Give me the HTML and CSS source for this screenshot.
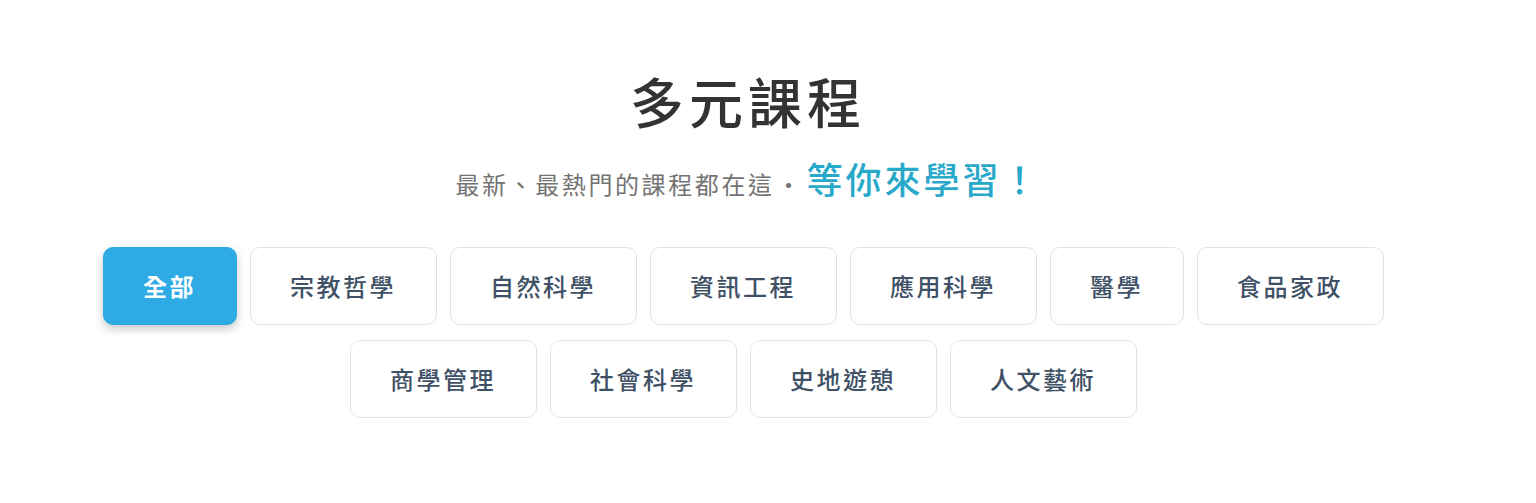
FILE: index.html
```html
<!DOCTYPE html>
<html lang="zh-Hant">
  <head>
    <meta charset="UTF-8" />
    <meta name="viewport" content="width=device-width, initial-scale=1.0" />
    <link rel="stylesheet" href="styles.css">
    <title>多元課程</title>
  </head>

  <body>
    <section class="courses">
      <h2 class="courses__title">多元課程</h2>
      <p class="courses__subtitle">
        最新、最熱門的課程都在這<span class="courses__dot">·</span><span class="courses__highlight">等你來學習！</span>
      </p>
      <ul class="courses__filters">
        <li><button type="button" class="filter-btn is-active">全部</button></li>
        <li><button type="button" class="filter-btn">宗教哲學</button></li>
        <li><button type="button" class="filter-btn">自然科學</button></li>
        <li><button type="button" class="filter-btn">資訊工程</button></li>
        <li><button type="button" class="filter-btn">應用科學</button></li>
        <li><button type="button" class="filter-btn">醫學</button></li>
        <li><button type="button" class="filter-btn">食品家政</button></li>
        <li><button type="button" class="filter-btn">商學管理</button></li>
        <li><button type="button" class="filter-btn">社會科學</button></li>
        <li><button type="button" class="filter-btn">史地遊憩</button></li>
        <li><button type="button" class="filter-btn">人文藝術</button></li>
      </ul>
    </section>
  </body>
</html>
```

FILE: styles.css
```css
* {
  box-sizing: border-box;
}
body {
  margin: 0;
  background-color: #fff;
  font-family: "Noto Sans CJK TC", "Noto Sans", sans-serif;
}
.courses {
  padding: 69px 40px 0 0;
  text-align: center;
}
.courses__title {
  margin: 0;
  font-size: 54px;
  line-height: 1.2;
  font-weight: 500;
  letter-spacing: 5px;
  color: #333;
}
.courses__subtitle {
  margin: 17px 0 0;
  font-size: 24px;
  line-height: 1.5;
  font-weight: 400;
  letter-spacing: 2.6px;
  color: #737373;
}
.courses__dot {
  margin: 0 0 0 2px;
  letter-spacing: 6px;
}
.courses__highlight {
  font-size: 36px;
  font-weight: 500;
  letter-spacing: 3px;
  color: #29a9c9;
}
.courses__filters {
  display: flex;
  flex-wrap: wrap;
  justify-content: center;
  gap: 15px 13px;
  max-width: 1300px;
  margin: 42px auto 0;
  padding: 0 10px 0 0;
  list-style: none;
}
.filter-btn {
  padding: 20px 39.5px;
  border: 1px solid #dde4ea;
  border-radius: 10px;
  background-color: #fff;
  font-family: inherit;
  font-size: 24px;
  line-height: 36px;
  font-weight: 500;
  letter-spacing: 2.5px;
  color: #3f5166;
  cursor: pointer;
}
.filter-btn.is-active {
  border-color: #2eabe4;
  background-color: #2eabe4;
  color: #fff;
  font-weight: 700;
  box-shadow: 0 4px 10px rgba(0, 0, 0, 0.22);
}
```
